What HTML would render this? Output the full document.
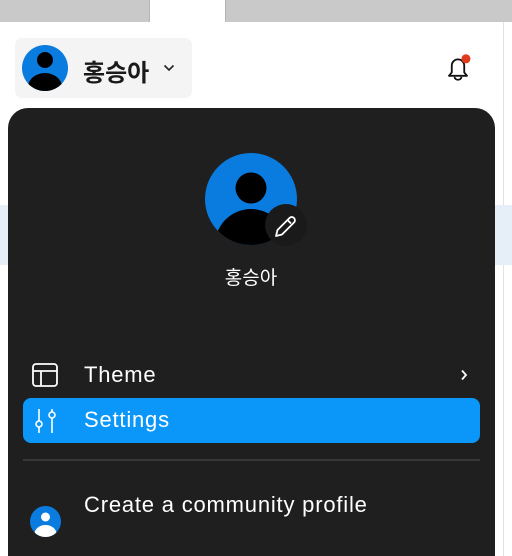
<!DOCTYPE html>
<html><head><meta charset="utf-8"><style>
*{margin:0;padding:0;box-sizing:border-box}
html,body{width:512px;height:556px;overflow:hidden}
body{background:#fff;position:relative;font-family:"Liberation Sans","Noto Sans CJK KR",sans-serif}
.abs{position:absolute}
.it{font-size:22px;letter-spacing:0.8px;color:#fff}
</style></head><body>
<div class="abs" style="left:0;top:0;width:150px;height:22px;background:#c9c9c9;border-right:1px solid #b5b5b5"></div>
<div class="abs" style="left:225px;top:0;width:287px;height:22px;background:#c9c9c9;border-left:1px solid #b5b5b5"></div>
<div class="abs" style="left:503px;top:22px;width:1px;height:534px;background:#e2e2e2"></div>
<div class="abs" style="left:0;top:205px;width:512px;height:60px;background:#e6eef7"></div>

<div class="abs" style="left:15px;top:38px;width:177px;height:60px;background:#f4f4f4;border-radius:7px"></div>
<svg class="abs" style="left:22px;top:45px" width="46" height="46" viewBox="0 0 46 46">
<defs><clipPath id="c1"><circle cx="23" cy="23" r="23"/></clipPath></defs>
<circle cx="23" cy="23" r="23" fill="#0a7ce0"/>
<g clip-path="url(#c1)"><circle cx="23" cy="15" r="8" fill="#000"/><ellipse cx="23" cy="42" rx="17" ry="14" fill="#000"/></g>
</svg>
<div class="abs" style="left:83px;top:53px;font-size:24px;font-weight:bold;color:#1a1a1a">홍승아</div>
<svg class="abs" style="left:163px;top:64px" width="12" height="8" viewBox="0 0 12 8"><path d="M1.5 1.5L6 6l4.5-4.5" fill="none" stroke="#222" stroke-width="1.6"/></svg>
<svg class="abs" style="left:441px;top:52px" width="34" height="34" viewBox="0 0 30 30">
<path d="M7 21h16l-2.5-3v-6a5.5 5.5 0 0 0-11 0v6z" fill="none" stroke="#111" stroke-width="1.6" stroke-linejoin="round"/>
<path d="M12 22a3 2.5 0 0 0 6 0" fill="none" stroke="#111" stroke-width="1.6"/>
<circle cx="22" cy="6" r="4" fill="#e03a1c"/>
</svg>

<div class="abs" style="left:8px;top:108px;width:487px;height:460px;background:#1f1f1f;border-radius:20px 20px 0 0"></div>
<svg class="abs" style="left:205px;top:153px" width="92" height="92" viewBox="0 0 92 92">
<defs><clipPath id="c2"><circle cx="46" cy="46" r="46"/></clipPath></defs>
<circle cx="46" cy="46" r="46" fill="#0a7ce0"/>
<g clip-path="url(#c2)"><circle cx="46" cy="35" r="15.5" fill="#000"/><ellipse cx="46" cy="92" rx="36" ry="36" fill="#000"/></g>
</svg>
<svg class="abs" style="left:264px;top:203px" width="44" height="44" viewBox="0 0 44 44">
<circle cx="22" cy="22" r="21" fill="#1a1a1a"/>
<path d="M12 33l1.5-6 12-12a2.5 2.5 0 0 1 4.5 4.5l-12 12z M23.5 17l3.5 3.5" fill="none" stroke="#fff" stroke-width="1.8" stroke-linejoin="round"/>
</svg>
<div class="abs" style="left:0;width:502px;top:263px;text-align:center;font-size:19px;color:#fff">홍승아</div>

<svg class="abs" style="left:31px;top:362px" width="28" height="26" viewBox="0 0 28 26">
<rect x="2" y="2" width="24" height="22" rx="3" fill="none" stroke="#fff" stroke-width="1.8"/>
<path d="M2 9h24M10 9v15" stroke="#fff" stroke-width="1.8"/>
</svg>
<div class="abs it" style="left:84px;top:362px">Theme</div>
<svg class="abs" style="left:459px;top:368px" width="10" height="14" viewBox="0 0 10 14"><path d="M3 2.5l4 4.5-4 4.5" fill="none" stroke="#fff" stroke-width="1.8"/></svg>

<div class="abs" style="left:23px;top:398px;width:457px;height:45px;background:#0b97fa;border-radius:8px"></div>
<svg class="abs" style="left:32px;top:407px" width="28" height="28" viewBox="0 0 28 28">
<g fill="none" stroke="#fff" stroke-width="1.6"><path d="M7 2v12M7 20v6M20 2v3M20 11v15"/><circle cx="7" cy="17" r="3"/><circle cx="20" cy="8" r="3"/></g>
</svg>
<div class="abs it" style="left:84px;top:407px">Settings</div>

<div class="abs" style="left:23px;top:459px;width:457px;height:2px;background:#383838"></div>
<svg class="abs" style="left:30px;top:506px" width="31" height="31" viewBox="0 0 31 31">
<defs><clipPath id="c3"><circle cx="15.5" cy="15.5" r="15.5"/></clipPath></defs>
<circle cx="15.5" cy="15.5" r="15.5" fill="#0a7ce0"/>
<g clip-path="url(#c3)"><circle cx="15.5" cy="11" r="4.5" fill="#fff"/><ellipse cx="15.5" cy="28" rx="11" ry="9" fill="#fff"/></g>
</svg>
<div class="abs it" style="left:84px;top:492px">Create a community profile</div>
</body></html>
